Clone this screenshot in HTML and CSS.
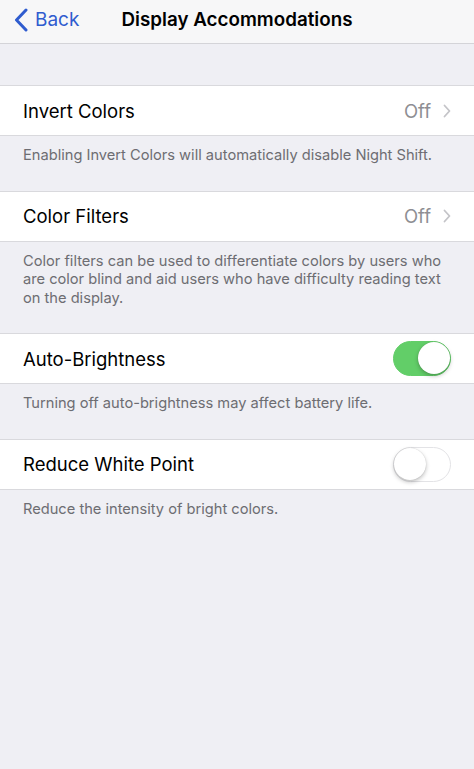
FILE: index.html
```html
<!DOCTYPE html>
<html lang="en">
<head>
  <meta charset="UTF-8">
  <meta name="viewport" content="width=device-width, initial-scale=1.0">
  <title>Display Accommodations</title>
  <link rel="stylesheet" href="styles.css">
</head>
<body>
  <div class="screen">
    <!-- Navigation bar -->
    <div class="nav-bar">
      <a class="back" href="#">
        <svg class="back-chevron" width="14" height="24" viewBox="0 0 14 24">
          <path d="M12 2 L2.5 12 L12 22" fill="none" stroke="currentColor" stroke-width="3" stroke-linecap="round" stroke-linejoin="round"/>
        </svg>
        <span>Back</span>
      </a>
      <div class="nav-title">Display Accommodations</div>
    </div>

    <div class="list">
      <div class="section">
        <div class="cell">
          <span class="cell-label">Invert Colors</span>
          <span class="cell-detail">Off
            <svg class="disclosure" width="8" height="14" viewBox="0 0 8 14">
              <path d="M1.5 1.5 L6.5 7 L1.5 12.5" fill="none" stroke="currentColor" stroke-width="1.8" stroke-linecap="round" stroke-linejoin="round"/>
            </svg>
          </span>
        </div>
        <div class="footer">Enabling Invert Colors will automatically disable Night Shift.</div>
      </div>

      <div class="section">
        <div class="cell">
          <span class="cell-label">Color Filters</span>
          <span class="cell-detail">Off
            <svg class="disclosure" width="8" height="14" viewBox="0 0 8 14">
              <path d="M1.5 1.5 L6.5 7 L1.5 12.5" fill="none" stroke="currentColor" stroke-width="1.8" stroke-linecap="round" stroke-linejoin="round"/>
            </svg>
          </span>
        </div>
        <div class="footer">Color filters can be used to differentiate colors by users who are color blind and aid users who have difficulty reading text on the display.</div>
      </div>

      <div class="section">
        <div class="cell">
          <span class="cell-label">Auto-Brightness</span>
          <span class="switch on"><span class="knob"></span></span>
        </div>
        <div class="footer">Turning off auto-brightness may affect battery life.</div>
      </div>

      <div class="section">
        <div class="cell">
          <span class="cell-label">Reduce White Point</span>
          <span class="switch"><span class="knob"></span></span>
        </div>
        <div class="footer">Reduce the intensity of bright colors.</div>
      </div>
    </div>
  </div>
</body>
</html>
```

FILE: styles.css
```css
/* Grouped settings list */
body {
  margin: 0;
  padding: 0;
  font-family: Inter, "Liberation Sans", Arial, sans-serif;
  background-color: #efeff4;
  color: #000;
}

.screen {
  min-height: 769px;
  background-color: #efeff4;
}

.nav-bar {
  height: 44px;
  display: flex;
  align-items: center;
  padding-bottom: 4px;
  position: relative;
  background-color: #f7f7f8;
  border-bottom: 1px solid #d4d4d8;
  box-sizing: border-box;
}

.back {
  display: flex;
  align-items: center;
  gap: 7px;
  padding-left: 14px;
  color: #2f5ccf;
  font-size: 19px;
  text-decoration: none;
}

.nav-title {
  position: absolute;
  left: 0;
  right: 0;
  text-align: center;
  font-size: 18.8px;
  font-weight: 600;
  pointer-events: none;
}

.list {
  padding-top: 41px;
}

.cell {
  height: 51px;
  display: flex;
  align-items: center;
  justify-content: space-between;
  padding: 0 23px;
  background-color: #fff;
  border-top: 1px solid #d9d9dd;
  border-bottom: 1px solid #d9d9dd;
  box-sizing: border-box;
}

.cell-label {
  font-size: 18.5px;
}

.cell-detail {
  display: flex;
  align-items: center;
  gap: 12px;
  color: #8e8e93;
  font-size: 18.5px;
}

.disclosure {
  color: #c4c4c8;
}

.footer {
  padding: 10px 23px 26px;
  color: #6d6d72;
  font-size: 14.65px;
  line-height: 18.5px;
}

/* Toggle switch */
.switch {
  width: 58px;
  height: 35px;
  border-radius: 18px;
  background-color: #fff;
  border: 1.5px solid #e3e3e6;
  box-sizing: border-box;
  position: relative;
}

.switch.on {
  background-color: #62ce68;
  border-color: #62ce68;
}

.knob {
  position: absolute;
  top: 0;
  left: 0;
  width: 32px;
  height: 32px;
  border-radius: 50%;
  background-color: #fff;
  box-shadow: 0 2px 4px rgba(0, 0, 0, 0.25), 0 0 1px rgba(0, 0, 0, 0.2);
}

.switch.on .knob {
  left: auto;
  right: 0;
}
```
